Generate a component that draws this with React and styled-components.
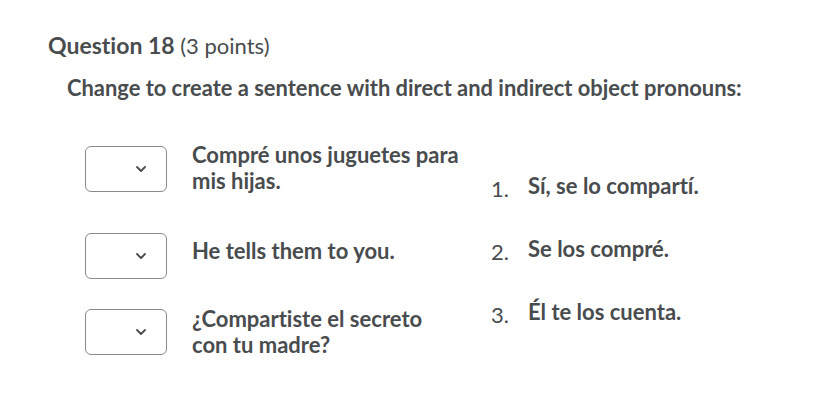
import styled, { createGlobalStyle } from "styled-components";

const GlobalStyle = createGlobalStyle`
    body {
        margin: 0;
        background: #ffffff;
        font-family: Lato, "Open Sans", "Liberation Sans", sans-serif;
        color: #494c4e;
        font-variant-ligatures: none;
    }
`;

const Page = styled.div`
    width: 832px;
    height: 404px;
    padding: 30px 0 0 48px;
    box-sizing: border-box;
`;

// 문제 제목
const Title = styled.h2`
    margin: 0;
    font-size: 23px;
    line-height: 30px;
    font-weight: 700;

    span {
        font-size: 22px;
        font-weight: 400;
    }
`;

const Prompt = styled.p`
    margin: 12px 0 0 19px;
    font-size: 21.9px;
    line-height: 30px;
    font-weight: 700;
`;

const Match = styled.div`
    display: flex;
    margin: 40px 0 0 37px;
`;

const Choices = styled.div`
    display: flex;
    flex-direction: column;
`;

const Row = styled.div`
    display: flex;
    align-items: center;
    gap: 25px;
    margin-top: ${(p) => p.$space || 0}px;
`;

const Select = styled.div`
    width: 82px;
    height: 46px;
    box-sizing: border-box;
    border: 1px solid #8a8a8a;
    border-radius: 6px;
    display: flex;
    align-items: center;
    justify-content: flex-end;
    padding-right: 20px;
    flex-shrink: 0;
`;

const Sentence = styled.div`
    width: 267px;
    font-size: 22px;
    line-height: 26px;
    font-weight: 700;
    position: relative;
    top: ${(p) => p.$shift || 0}px;
`;

const Answers = styled.ol`
    list-style: none;
    margin: 30px 0 0 32px;
    padding: 0;
    display: flex;
    flex-direction: column;
    gap: 37px;
`;

const Answer = styled.li`
    display: flex;
    align-items: baseline;
    font-size: 22px;
    line-height: 26px;
    font-weight: 700;
`;

const Num = styled.span`
    width: 37px;
    font-weight: 400;
    font-size: 22px;
    position: relative;
    top: 3px;
`;

function Chevron() {
    return (
        <svg width="10" height="6" viewBox="0 0 10 6">
            <path
                d="M1 1l4 4 4-4"
                fill="none"
                stroke="#494c4e"
                strokeWidth="1.8"
                strokeLinecap="round"
                strokeLinejoin="round"
            />
        </svg>
    );
}

const rows = [
    { text: "Compré unos juguetes para mis hijas.", space: 0, shift: -1 },
    { text: "He tells them to you.", space: 38, shift: -5 },
    { text: "¿Compartiste el secreto con tu madre?", space: 27, shift: 0 },
];

const answers = ["Sí, se lo compartí.", "Se los compré.", "Él te los cuenta."];

export default function App() {
    return (
        <>
            <GlobalStyle />
            <Page>
                <Title>
                    Question 18 <span>(3 points)</span>
                </Title>
                <Prompt>
                    Change to create a sentence with direct and indirect object pronouns:
                </Prompt>
                <Match>
                    <Choices>
                        {rows.map((r) => (
                            <Row key={r.text} $space={r.space}>
                                <Select>
                                    <Chevron />
                                </Select>
                                <Sentence $shift={r.shift}>{r.text}</Sentence>
                            </Row>
                        ))}
                    </Choices>
                    <Answers>
                        {answers.map((a, i) => (
                            <Answer key={a}>
                                <Num>{i + 1}.</Num>
                                {a}
                            </Answer>
                        ))}
                    </Answers>
                </Match>
            </Page>
        </>
    );
}
